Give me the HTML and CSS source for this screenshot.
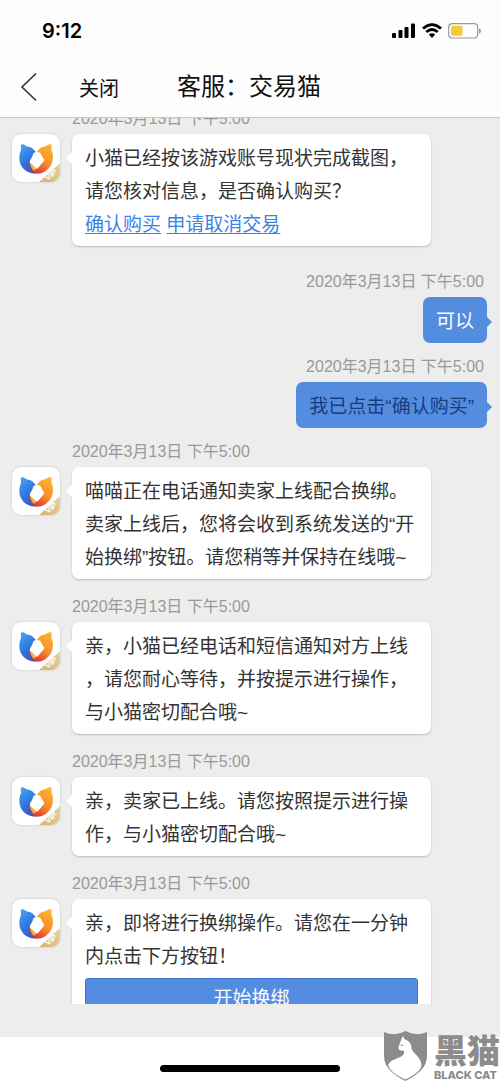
FILE: index.html
```html
<!DOCTYPE html>
<html lang="zh-CN">
<head>
<meta charset="utf-8">
<meta name="viewport" content="width=device-width, initial-scale=1">
<title>客服：交易猫</title>
<link rel="stylesheet" href="styles.css">
</head>
<body>
<svg class="sprite" aria-hidden="true">
  <defs>
    <linearGradient id="blue" x1="0" y1="0" x2="0.5" y2="1">
      <stop offset="0" stop-color="#49a9f3"/><stop offset="0.6" stop-color="#2f78e0"/><stop offset="1" stop-color="#4a55b8"/>
    </linearGradient>
    <linearGradient id="warm" x1="0.8" y1="0" x2="0.2" y2="1">
      <stop offset="0" stop-color="#fbb42c"/><stop offset="0.5" stop-color="#f78f2b"/><stop offset="0.8" stop-color="#e54a36"/><stop offset="1" stop-color="#c92a4e"/>
    </linearGradient>
    <linearGradient id="gold" x1="0" y1="1" x2="1" y2="0">
      <stop offset="0" stop-color="#d3b676"/><stop offset="1" stop-color="#e6d3a0"/>
    </linearGradient>
  </defs>
  <symbol id="cat" viewBox="0 0 48 48">
    <path fill="url(#warm)" d="M24.500 18.500 C26.500 16 28 13.500 31 12.800 C33 12.800 34.500 11.500 36.500 10.500 C38.500 9.700 40 10.500 39.600 12.500 L39.500 16 C41 19 41.300 22 40.700 26 C39.500 34 32.500 39.700 25 39.700 C20 39.700 16 37 14 33 L20 28Z"/>
    <path fill="url(#blue)" d="M8.800 12.500 C8.500 10.500 10 9.700 11.800 10.500 C13.500 11.500 14.500 12.700 16.500 12.700 C20 13 22 16 24.500 18.500 L18.500 27 C17.500 31 19 36 23 39.600 C14 39.300 7.700 33 7.400 25 C7.200 21 7.800 18.500 9 16Z"/>
    <path fill="#f5b33c" d="M18 28 C18 31 19.500 34.500 22 37 L27 32Z"/>
    <path fill="#fff" d="M21.500 19 Q25 17 28.500 19 Q29.300 21.500 32.500 26 Q30 29.500 26 34 Q25 35 24 34 L18 28.500 Q17.500 27.500 18.300 26 Q20.500 23 21.500 19Z"/>
    <path fill="url(#gold)" d="M27 48 L48 29 V48Z"/>
    <text class="vip" x="36" y="47" transform="rotate(-42 36 47)">VIP</text>
  </symbol>
</svg>

<div class="screen">
  <header class="top">
    <div class="status">
      <span class="clock">9:12</span>
      <div class="indicators">
        <svg width="24" height="16" viewBox="0 0 24 16" aria-label="信号"><rect x="0" y="10" width="4" height="5" rx="1"/><rect x="6.500" y="7" width="4" height="8" rx="1"/><rect x="12.500" y="4" width="4" height="11" rx="1"/><rect x="19" y="0.500" width="4" height="14.500" rx="1"/></svg>
        <svg width="20" height="16" viewBox="0 0 20 16" aria-label="无线网络"><g fill="none" stroke="#000" stroke-width="2.700"><path d="M1 5.500 Q10 -2.300 19 5.500"/><path d="M4.300 9 Q10 4 15.700 9"/></g><path d="M6.800 11.500 Q10 8.800 13.200 11.500 L10 15Z"/></svg>
        <svg width="33" height="16" viewBox="0 0 33 16" aria-label="电池"><rect x="0.700" y="0.700" width="29" height="14.300" rx="3.500" fill="none" stroke="#999" stroke-width="1.200"/><rect x="3" y="2.800" width="11.500" height="10" rx="1.500" fill="#f8c83c"/><path fill="#999" d="M31 5.500 Q33 6 33 8 T31 10.500Z"/></svg>
      </div>
    </div>
    <nav class="nav">
      <button class="back" type="button" aria-label="返回"><svg width="18" height="30" viewBox="0 0 18 30"><path d="M16 1.500 L2 15 L16 28.500" fill="none" stroke="#333" stroke-width="1.600"/></svg></button>
      <button class="close" type="button">关闭</button>
      <h1 class="title">客服：交易猫</h1>
    </nav>
  </header>

  <main class="chat">
    <section class="message lead">
      <time class="date">2020年3月13日 下午5:00</time>
      <div class="row"><svg class="avatar" aria-label="交易猫"><use href="#cat"/></svg>
        <div class="bubble">小猫已经按该游戏账号现状完成截图，<br>请您核对信息，是否确认购买？<br><a href="#buy">确认购买</a> <a href="#cancel">申请取消交易</a></div></div>
    </section>
    <section class="message mine">
      <time class="date">2020年3月13日 下午5:00</time>
      <div class="bubble">可以</div>
    </section>
    <section class="message mine">
      <time class="date">2020年3月13日 下午5:00</time>
      <div class="bubble action">我已点击“确认购买”</div>
    </section>
    <section class="message">
      <time class="date">2020年3月13日 下午5:00</time>
      <div class="row"><svg class="avatar" aria-label="交易猫"><use href="#cat"/></svg>
        <div class="bubble">喵喵正在电话通知卖家上线配合换绑。<br>卖家上线后，您将会收到系统发送的“开<br>始换绑”按钮。请您稍等并保持在线哦~</div></div>
    </section>
    <section class="message">
      <time class="date">2020年3月13日 下午5:00</time>
      <div class="row"><svg class="avatar" aria-label="交易猫"><use href="#cat"/></svg>
        <div class="bubble">亲，小猫已经电话和短信通知对方上线<br>，请您耐心等待，并按提示进行操作，<br>与小猫密切配合哦~</div></div>
    </section>
    <section class="message">
      <time class="date">2020年3月13日 下午5:00</time>
      <div class="row"><svg class="avatar" aria-label="交易猫"><use href="#cat"/></svg>
        <div class="bubble">亲，卖家已上线。请您按照提示进行操<br>作，与小猫密切配合哦~</div></div>
    </section>
    <section class="message">
      <time class="date">2020年3月13日 下午5:00</time>
      <div class="row"><svg class="avatar" aria-label="交易猫"><use href="#cat"/></svg>
        <div class="bubble">亲，即将进行换绑操作。请您在一分钟<br>内点击下方按钮！<button class="start" type="button">开始换绑</button></div></div>
    </section>
  </main>

  <footer class="bottom">
    <div class="home"></div>
    <div class="watermark">
      <svg width="46" height="52" viewBox="0 0 46 52" aria-hidden="true">
        <path fill="#8c8c8c" d="M1 2 Q12 7 22.500 1 Q33 7 44 2 V26 C44 38 34 45 22.500 51 C11 45 1 38 1 26Z"/>
        <path fill="#fff" d="M19.500 6 L22 9.500 C26 10.500 28.500 14 28.500 18 C28.500 21 32 23 35 27 C39 32 39.500 36 36.500 40 C33 44 27.500 47 22.500 49.500 C15 46 7.500 42 5 35 C8 29 15 29 19 26 C21.500 24 21.500 22 20.500 20.500 C18 21 15 20 15.500 17 C16.500 15 17 12 18 10.500Z"/>
        <path d="M17.500 15 L20 15.500" stroke="#8c8c8c"/>
      </svg>
      <div class="brand"><span class="brand-cn">黑猫</span><span class="brand-en">BLACK CAT</span></div>
    </div>
  </footer>
</div>
</body>
</html>
```
FILE: styles.css
```css
* { box-sizing: border-box; }

body {
  margin: 0;
  background: #fff;
  color: #333;
  font-family: "Liberation Sans", "Noto Sans CJK SC", sans-serif;
}

button {
  margin: 0;
  padding: 0;
  border: 0;
  background: none;
  color: inherit;
  font: inherit;
}

.sprite { position: absolute; width: 0; height: 0; }
.vip { fill: #fff; font: bold 8px "Liberation Sans", sans-serif; }

.screen {
  display: flex;
  flex-direction: column;
  height: 100vh;
  overflow: hidden;
}

.top {
  flex: none;
  background: #fdfdfd;
  border-bottom: 1px solid #c8c8c8;
  color: #111;
}

.status {
  display: flex;
  align-items: center;
  justify-content: space-between;
  height: 61px;
  padding: 0 19px 0 42px;
}
.clock { color: #000; font: 600 20px/24px Inter, sans-serif; }
.indicators { display: flex; gap: 6px; }

.nav { display: flex; align-items: center; height: 56px; padding: 0 20px 4px; }
.back { display: flex; }
.close { margin-left: 41px; padding-top: 4px; font-size: 20px; line-height: 30px; }
.title { margin: 0 0 0 58px; font-size: 24px; font-weight: 400; line-height: 36px; }

.chat {
  flex: 1 1 0;
  min-height: 0;
  overflow: hidden;
  background: #ededed;
}

.message { margin-bottom: 17px; padding: 0 69px 0 12px; }
.lead { margin-top: -10px; margin-bottom: 25px; }
.row { display: flex; align-items: flex-start; gap: 12px; }

.date {
  display: block;
  margin: 0 0 4px 60px;
  color: #999;
  font-size: 16px;
  line-height: 22px;
}

.avatar {
  flex: none;
  width: 48px;
  height: 48px;
  border-radius: 9px;
  background: #fff;
  box-shadow: 0 0 2px #bbb;
}

.bubble {
  position: relative;
  flex: 1;
  padding: 8px 13px 5px;
  border-radius: 7px;
  background: #fff;
  box-shadow: 0 1px 2px #bbb;
  font-size: 19px;
  line-height: 33px;
}
.bubble::before {
  content: "";
  position: absolute;
  top: 18px;
  left: -6px;
  border: solid transparent;
  border-width: 6px 6px 6px 0;
  border-right-color: #fff;
}
.bubble a { color: #3b82e8; text-decoration-thickness: 1px; text-underline-offset: 2px; }

.mine {
  display: flex;
  flex-direction: column;
  align-items: flex-end;
  margin-bottom: 13px;
  padding: 0 13px;
}
.mine .date { margin: 0 3px 4px 0; }
.mine .bubble { flex: none; background: #548de0; box-shadow: none; color: #fff; }
.mine .bubble::before {
  top: 20px;
  right: -5px;
  left: auto;
  border-width: 5px 0 5px 5px;
  border-color: transparent transparent transparent #548de0;
}
.mine .action { color: #163d7d; }

.start {
  display: block;
  width: 100%;
  height: 42px;
  margin-top: 5px;
  border: 1px solid #3c76cc;
  border-radius: 3px;
  background: #548de0;
  color: #fff;
  line-height: 40px;
}

.bottom {
  position: relative;
  flex: none;
  padding: 28px 0 10px;
  border-top: 33px solid #ededed;
  background: #fff;
}
.home { width: 36%; height: 7px; margin: 0 auto; border-radius: 4px; background: #000; }

.watermark {
  position: absolute;
  right: 0;
  bottom: 0;
  display: flex;
  align-items: flex-end;
  gap: 5px;
  color: #8c8c8c;
}
.brand { display: flex; flex-direction: column; white-space: nowrap; }
.brand-cn { font: 900 33px/38px "Noto Sans CJK SC", sans-serif; }
.brand-en { font: 800 11px/14px Inter, sans-serif; }
```
